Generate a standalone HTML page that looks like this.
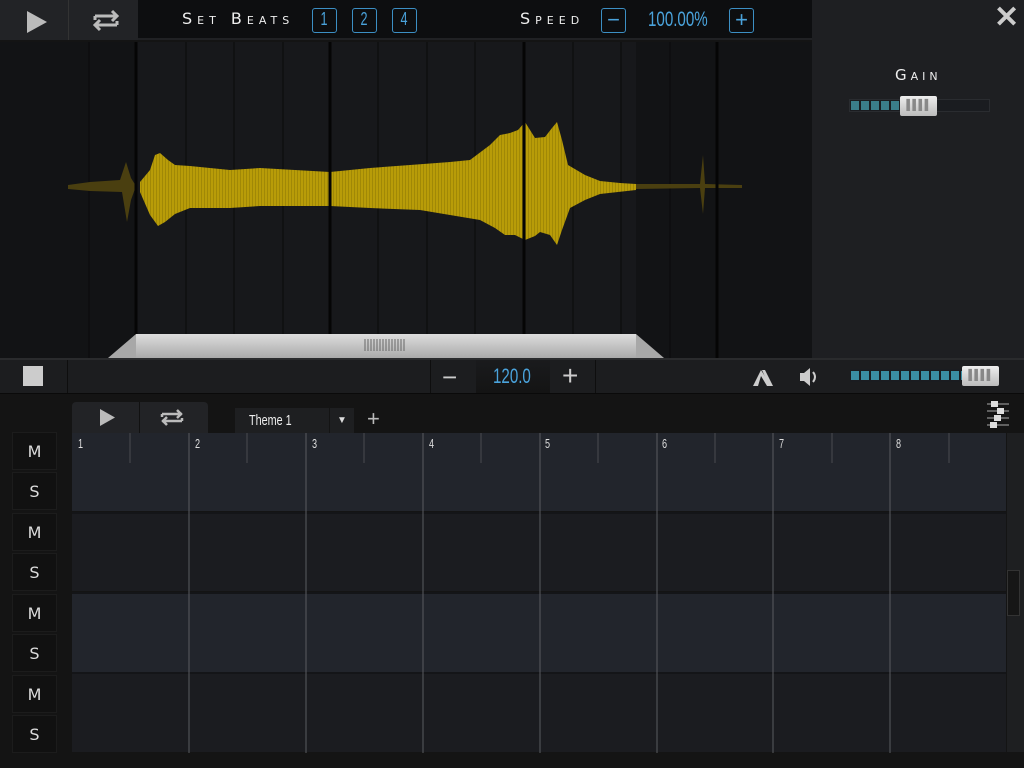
<!DOCTYPE html>
<html><head><meta charset="utf-8"><style>
*{margin:0;padding:0;box-sizing:border-box}
body{width:1024px;height:768px;background:#141414;position:relative;overflow:hidden;font-family:"Liberation Sans",sans-serif;color:#ddd}
.a{position:absolute}
.sc{font-variant:small-caps;letter-spacing:4px;font-family:"DejaVu Sans",sans-serif;color:#eee}
.nar{display:inline-block;transform:scaleX(0.72);transform-origin:left center}
.bb{position:absolute;border:1.5px solid #3c8fc4;border-radius:3px;color:#4aa3dc;text-align:center;font-size:18px;line-height:21px;width:25px;height:25px;top:8px}
.bb span{display:inline-block;transform:scaleX(0.7)}
.ms{position:absolute;left:12px;width:45px;height:38px;background:#111;border:1px solid #1c1c1c;color:#ddd;font-family:"DejaVu Sans",sans-serif;font-size:16px;text-align:center;line-height:38px}
.num{position:absolute;top:436px;font-size:13px;color:#ddd;transform:scaleX(0.7);transform-origin:left}
</style></head><body>
<div class="a" style="left:0;top:0;width:812px;height:40px;background:#0d0e10;border-bottom:2px solid #202124"></div>
<div class="a" style="left:0;top:0;width:69px;height:40px;background:#222326;border-right:1px solid #333"></div>
<div class="a" style="left:69px;top:0;width:69px;height:40px;background:#222326"></div>
<svg class="a" style="left:0;top:0" width="140" height="40"><polygon points="27,11 27,33 47,22" fill="#bbb"/><path d="M95,16 h22 M112,11 l5,5 -5,5 M117,25 h-22 M100,20 l-5,5 5,5 M95,16 v4 M117,25 v-4" stroke="#bbb" stroke-width="3" fill="none"/></svg>
<div class="a sc" style="left:182px;top:9px;font-size:16px;letter-spacing:5px">Set Beats</div>
<div class="bb" style="left:312px"><span>1</span></div><div class="bb" style="left:352px"><span>2</span></div><div class="bb" style="left:392px"><span>4</span></div>
<div class="a sc" style="left:520px;top:9px;font-size:16px;letter-spacing:5px">Speed</div>
<div class="bb" style="left:601px;font-size:22px">−</div>
<div class="a" style="left:648px;top:8px;color:#4aa3dc;font-size:21px"><span class="nar">100.00%</span></div>
<div class="bb" style="left:729px;font-size:22px">+</div>
<div class="a" style="left:812px;top:0;width:212px;height:358px;background:#1e1f22"></div>
<div class="a" style="left:994px;top:0;font-size:30px;color:#ccc;font-weight:bold">✕</div>
<div class="a sc" style="left:895px;top:66px;font-size:15px">Gain</div>
<div class="a" style="left:849px;top:99px;width:141px;height:13px;background:#1a1c20;border:1px solid #2a2c30"></div>
<div class="a" style="left:851px;top:101px;width:50px;height:9px;background:repeating-linear-gradient(90deg,#3a7d8a 0 8px,#1a1c20 8px 10px)"></div>
<div class="a" style="left:900px;top:96px;width:37px;height:20px;background:linear-gradient(#eee,#bbb);border-radius:2px;color:#888;font-size:10px;text-align:center;line-height:20px;letter-spacing:-1px">▌▌▌▌</div>
<svg class="a" style="left:0;top:42px" width="812" height="316">
<defs><linearGradient id="g" x1="0" y1="0" x2="0" y2="1"><stop offset="0" stop-color="#ddd"/><stop offset="1" stop-color="#aaa"/></linearGradient>
<pattern id="st" width="3" height="10" patternUnits="userSpaceOnUse"><rect width="3" height="10" fill="#b89c08"/><rect width="1" height="10" fill="#a08806"/></pattern></defs>
<rect width="812" height="316" fill="#121315"/>
<rect x="136" width="500" height="316" fill="#17181b"/>
<g stroke="#0a0a0a" stroke-width="1"><path d="M89,0v316M186,0v316M234,0v316M283,0v316M378,0v316M427,0v316M475,0v316M573,0v316M621,0v316M670,0v316"/></g>
<g transform="translate(0,-42)">
<polygon points="68,185 90,182 120,180 126,162 131,178 136,186 131,200 127,222 122,192 90,191 68,189" fill="#4a3f10"/>
<polygon points="636,184 700,184 703,155 705,184 742,185 742,188 705,188 703,214 700,188 636,189" fill="#4a3f10"/>
<polygon points="140,182 150,170 155,155 160,153 168,160 175,165 190,166 230,170 260,168 330,172 370,168 410,165 450,162 470,160 490,145 500,135 510,133 518,130 525,122 535,138 545,137 552,128 557,122 562,140 568,165 585,175 600,181 620,183 636,184 636,190 600,194 585,200 570,208 562,230 557,245 550,235 540,232 535,236 525,240 515,235 505,235 495,228 480,220 450,215 420,210 370,208 330,206 260,206 230,208 190,208 175,214 165,222 158,226 150,215 140,192" fill="url(#st)"/>
</g>
<g stroke="#050505" stroke-width="3"><path d="M136,0v316M330,0v316M524,0v316M717,0v316"/></g>
<polygon points="108,316 136,292 636,292 664,316" fill="#a8a8a8"/>
<rect x="136" y="292" width="500" height="24" fill="url(#g)"/>
<g stroke="#666" stroke-width="1"><path d="M365,297v12M368,297v12M371,297v12M374,297v12M377,297v12M380,297v12M383,297v12M386,297v12M389,297v12M392,297v12M395,297v12M398,297v12M401,297v12M404,297v12"/></g>
</svg>
<div class="a" style="left:0;top:358px;width:1024px;height:36px;background:#1c1d1f;border-top:2px solid #2a2b2d;border-bottom:1px solid #0a0a0a"></div>
<div class="a" style="left:67px;top:360px;width:1px;height:33px;background:#0e0e0e"></div>
<div class="a" style="left:23px;top:366px;width:20px;height:20px;background:#ccc"></div>
<div class="a" style="left:430px;top:360px;width:166px;height:33px;border-left:1px solid #0e0e0e;border-right:1px solid #0e0e0e"></div>
<div class="a" style="left:476px;top:360px;width:74px;height:33px;background:linear-gradient(#1a1b1d,#141414)"></div>
<div class="a" style="left:442px;top:362px;font-size:26px;color:#ccc">−</div>
<div class="a" style="left:493px;top:365px;font-size:21px;color:#4aa3dc"><span class="nar">120.0</span></div>
<div class="a" style="left:562px;top:360px;font-size:28px;color:#ccc">+</div>
<svg class="a" style="left:750px;top:366px" width="70" height="22"><polygon points="3,20 11,4 21,20 17,20 11,10 8,20" fill="#ccc"/><polygon points="12,4 15,4 23,20 19,20" fill="#ccc"/><polygon points="50,7 54,7 60,2 60,20 54,15 50,15" fill="#ccc"/><path d="M63,6 q4,5 0,10" stroke="#ccc" stroke-width="2" fill="none"/></svg>
<div class="a" style="left:850px;top:369px;width:140px;height:13px;background:#1a1c20"></div>
<div class="a" style="left:851px;top:371px;width:112px;height:9px;background:repeating-linear-gradient(90deg,#3a8ea4 0 8px,#1a1c20 8px 10px)"></div>
<div class="a" style="left:962px;top:366px;width:37px;height:20px;background:linear-gradient(#eee,#bbb);border-radius:2px;color:#888;font-size:10px;text-align:center;line-height:20px;letter-spacing:-1px">▌▌▌▌</div>
<div class="a" style="left:72px;top:402px;width:136px;height:31px;background:#222326;border-radius:4px 4px 0 0"></div>
<div class="a" style="left:139px;top:402px;width:1px;height:31px;background:#111"></div>
<svg class="a" style="left:72px;top:402px" width="136" height="31"><polygon points="28,7 28,24 43,15.5" fill="#bbb"/><path d="M90,12 h20 M105,8 l4,4 -4,4 M110,19 h-20 M95,15 l-4,4 4,4 M90,12 v3 M110,19 v-3" stroke="#bbb" stroke-width="2.5" fill="none"/></svg>
<div class="a" style="left:235px;top:408px;width:94px;height:25px;background:#1e1f21;color:#eee;font-size:15px;line-height:25px;padding-left:14px"><span class="nar">Theme 1</span></div>
<div class="a" style="left:330px;top:408px;width:24px;height:25px;background:#1e1f21;color:#ddd;font-size:10px;text-align:center;line-height:25px">▼</div>
<div class="a" style="left:367px;top:406px;font-size:22px;color:#bbb">+</div>
<svg class="a" style="left:984px;top:400px" width="30" height="30"><g stroke="#aaa"><path d="M3,4h22M3,11h22M3,18h22M3,25h22"/></g><g fill="#ddd"><rect x="7" y="1" width="7" height="6"/><rect x="13" y="8" width="7" height="6"/><rect x="10" y="15" width="7" height="6"/><rect x="6" y="22" width="7" height="6"/></g></svg>
<div class="a" style="left:72px;top:433px;width:934px;height:78px;background:#22252c"></div>
<div class="a" style="left:72px;top:512px;width:934px;height:79px;background:#1b1c20;border-top:2px solid #141518"></div>
<div class="a" style="left:72px;top:592px;width:934px;height:80px;background:#22252c;border-top:2px solid #141518"></div>
<div class="a" style="left:72px;top:672px;width:934px;height:80px;background:#1b1c20;border-top:2px solid #141518"></div>
<div class="a" style="left:1007px;top:433px;width:17px;height:319px;background:#1e1f21"></div>
<div class="a" style="left:1007px;top:570px;width:13px;height:46px;background:#161616;border:1px solid #333"></div>
<svg class="a" style="left:72px;top:433px" width="934" height="320"><g stroke="#4a4c50"><path d="M58,0v30M175,0v30M292,0v30M409,0v30M526,0v30M643,0v30M760,0v30M877,0v30"/></g><g stroke="#5a5c60"><path d="M117,0v320M234,0v320M351,0v320M468,0v320M585,0v320M701,0v320M818,0v320"/></g></svg>
<div class="num" style="left:78px">1</div><div class="num" style="left:195px">2</div><div class="num" style="left:312px">3</div><div class="num" style="left:429px">4</div><div class="num" style="left:545px">5</div><div class="num" style="left:662px">6</div><div class="num" style="left:779px">7</div><div class="num" style="left:896px">8</div>
<div class="ms" style="top:432px">M</div><div class="ms" style="top:472px">S</div>
<div class="ms" style="top:513px">M</div><div class="ms" style="top:553px">S</div>
<div class="ms" style="top:594px">M</div><div class="ms" style="top:634px">S</div>
<div class="ms" style="top:675px">M</div><div class="ms" style="top:715px">S</div>
</body></html>
